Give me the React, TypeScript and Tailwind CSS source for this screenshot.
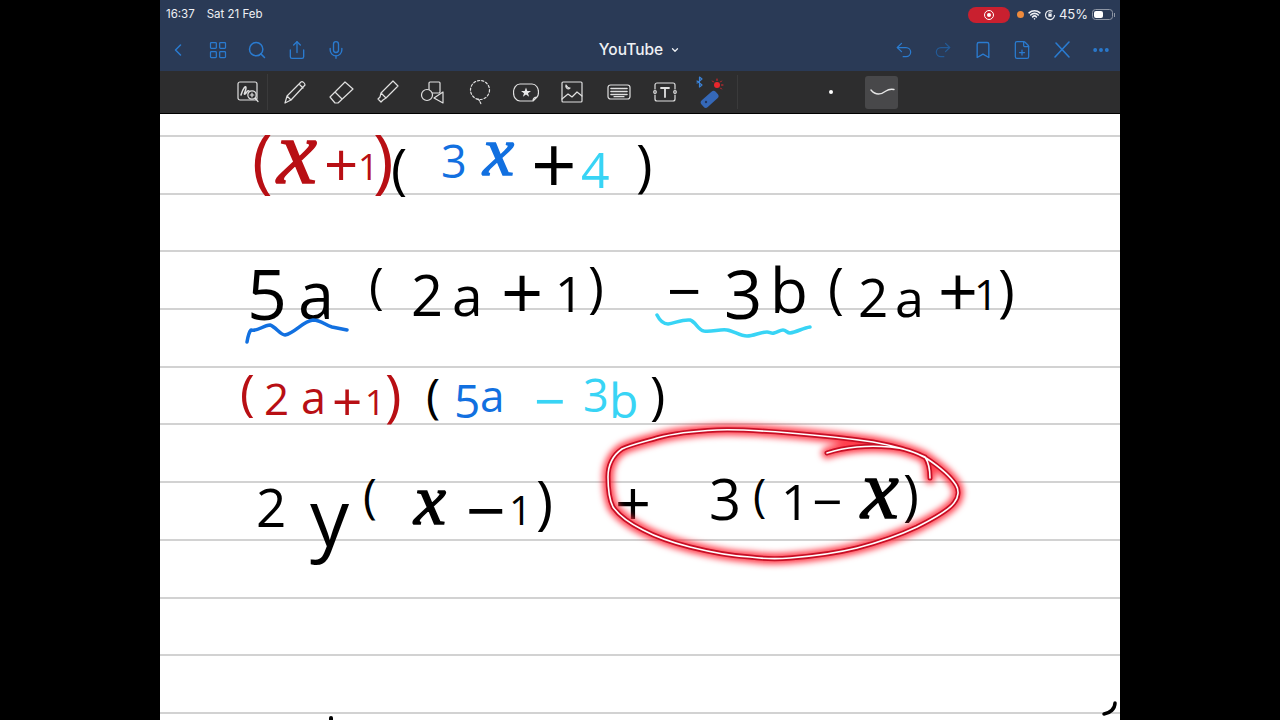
import { Bookmark, ChevronDown, ChevronLeft, Ellipsis, FilePlus, LayoutGrid, Mic, Redo2, Search, Share, Undo2, Wifi } from 'lucide-react'

const ruleRows = [0, 1, 2, 3, 4, 5, 6, 7, 8, 9]

// handwritten notes, placed on the page as on a free canvas. f marks the curly x
const notes = [
  { t: '(', c: 'left-[92px] top-[-5px] text-[70px] text-[#b80f14]' },
  { t: 'x', f: true, c: 'left-[117px] top-[-24px] text-[90px] text-[#b80f14]' },
  { t: '+', c: 'left-[164px] top-[8px] text-[60px] text-[#b80f14]' },
  { t: '1', c: 'left-[198px] top-[28px] text-[36px] font-medium text-[#b80f14]' },
  { t: ')', c: 'left-[213px] top-[-5px] text-[70px] text-[#b80f14]' },
  { t: '(', c: 'left-[231px] top-[14px] text-[55px] text-black' },
  { t: '3', c: 'left-[281px] top-[15px] text-[45px] font-medium text-[#1270e0]' },
  { t: 'x', f: true, c: 'left-[323px] top-[-11px] text-[70px] text-[#1270e0]' },
  { t: '+', c: 'left-[371px] top-[-7px] text-[80px] text-black' },
  { t: '4', c: 'left-[421px] top-[20px] text-[50px] font-medium text-[#38d4f5]' },
  { t: ')', c: 'left-[476px] top-[11px] text-[56px] text-black' },

  { t: '5', c: 'left-[87px] top-[130px] text-[70px] text-black' },
  { t: 'a', c: 'left-[138px] top-[135px] text-[65px] text-black' },
  { t: '(', c: 'left-[209px] top-[135px] text-[50px] text-black' },
  { t: '2', c: 'left-[251px] top-[141px] text-[56px] text-black' },
  { t: 'a', c: 'left-[292px] top-[142px] text-[55px] text-black' },
  { t: '+', c: 'left-[341px] top-[125px] text-[74px] text-black' },
  { t: '1', c: 'left-[395px] top-[144px] text-[50px] text-black' },
  { t: ')', c: 'left-[428px] top-[134px] text-[54px] text-black' },
  { t: '−', c: 'left-[507px] top-[134px] text-[60px] text-black' },
  { t: '3', c: 'left-[564px] top-[133px] text-[67px] text-black' },
  { t: 'b', c: 'left-[610px] top-[132px] text-[62px] text-black' },
  { t: '(', c: 'left-[668px] top-[135px] text-[54px] text-black' },
  { t: '2', c: 'left-[698px] top-[146px] text-[53px] text-black' },
  { t: 'a', c: 'left-[735px] top-[147px] text-[52px] text-black' },
  { t: '+', c: 'left-[778px] top-[127px] text-[70px] text-black' },
  { t: '1', c: 'left-[814px] top-[151px] text-[42px] font-medium text-black' },
  { t: ')', c: 'left-[838px] top-[136px] text-[57px] text-black' },

  { t: '(', c: 'left-[80px] top-[242px] text-[50px] font-medium text-[#b80f14]' },
  { t: '2', c: 'left-[104px] top-[254px] text-[44px] font-medium text-[#b80f14]' },
  { t: 'a', c: 'left-[141px] top-[251px] text-[45px] font-medium text-[#b80f14]' },
  { t: '+', c: 'left-[172px] top-[250px] text-[53px] font-medium text-[#b80f14]' },
  { t: '1', c: 'left-[205px] top-[263px] text-[35px] font-medium text-[#b80f14]' },
  { t: ')', c: 'left-[225px] top-[241px] text-[56px] text-[#b80f14]' },
  { t: '(', c: 'left-[266px] top-[247px] text-[48px] font-medium text-black' },
  { t: '5', c: 'left-[294px] top-[254px] text-[46px] font-medium text-[#1270e0]' },
  { t: 'a', c: 'left-[320px] top-[251px] text-[44px] font-medium text-[#1270e0]' },
  { t: '−', c: 'left-[374px] top-[247px] text-[55px] text-[#38d4f5]' },
  { t: '3', c: 'left-[423px] top-[249px] text-[45px] font-medium text-[#38d4f5]' },
  { t: 'b', c: 'left-[449px] top-[252px] text-[48px] font-medium text-[#38d4f5]' },
  { t: ')', c: 'left-[490px] top-[244px] text-[52px] text-black' },

  { t: '2', c: 'left-[96px] top-[356px] text-[53px] text-black' },
  { t: 'y', c: 'left-[150px] top-[348px] text-[78px] text-black' },
  { t: '(', c: 'left-[203px] top-[349px] text-[47px] font-medium text-black' },
  { t: 'x', f: true, c: 'left-[254px] top-[336px] text-[72px] text-black' },
  { t: '−', c: 'left-[306px] top-[346px] text-[70px] text-black' },
  { t: '1', c: 'left-[349px] top-[368px] text-[40px] font-medium text-black' },
  { t: ')', c: 'left-[376px] top-[346px] text-[58px] text-black' },
  { t: '+', c: 'left-[455px] top-[344px] text-[63px] text-black' },
  { t: '3', c: 'left-[549px] top-[345px] text-[56px] text-black' },
  { t: '(', c: 'left-[593px] top-[349px] text-[45px] font-medium text-black' },
  { t: '1', c: 'left-[621px] top-[352px] text-[50px] text-black' },
  { t: '−', c: 'left-[652px] top-[350px] text-[53px] text-black' },
  { t: 'x', f: true, c: 'left-[701px] top-[316px] text-[85px] text-black' },
  { t: ')', c: 'left-[743px] top-[342px] text-[54px] text-black' },
]

const lasso =
  'M930 478 C930 470 929 463 925 457 C908 449 890 445 873 442 C845 438 815 435 790 433 C765 431 740 429 717 430 C695 431 675 433 657 438 C643 442 630 445 622 449 C612 456 608 466 608 477 C608 490 609 499 613 507 C620 517 631 524 643 530 C658 538 674 543 690 547 C710 552 730 556 750 557 C765 559 778 559 790 558 C815 556 837 553 857 548 C880 542 900 535 917 527 C933 519 948 511 954 503 C959 497 959 490 956 485 C951 477 941 468 926 458 C914 451 902 448 890 447 C878 446 868 446 857 447 C846 448 836 450 827 453'

function Ink() {
  return (
    <svg className="absolute inset-0 h-full w-full" viewBox="160 114 960 606" fill="none" strokeLinecap="round" strokeLinejoin="round">
      <path d="M247 342 C248 336 249 332 251 330 C258 332 263 325 270 325 C276 327 280 335 285 335 C295 333 303 321 313 320 C321 320 325 325 332 327 L347 330" stroke="#1270e0" strokeWidth="3.5" />
      <path d="M657 315 C660 321 664 324 668 324 C675 323 683 319 690 320 C696 322 698 330 704 331 C712 332 720 329 727 330 C734 331 740 336 747 336 C754 336 760 332 767 332 C770 332 771 334 774 333 C778 332 780 330 783 330 C786 330 787 333 790 333 C797 332 803 328 810 327" stroke="#38d4f5" strokeWidth="3.5" />
      <path d="M331 718 L331 720" stroke="#000" strokeWidth="4" />
      <path d="M1115 703 C1115 709 1110 713 1104 714" stroke="#000" strokeWidth="3.5" />
      <path d={lasso} stroke="#ff2a3a" strokeOpacity="0.9" strokeWidth="11" className="blur-[3px]" />
      <path d={lasso} stroke="#c70f25" strokeWidth="5" />
      <path d={lasso} stroke="#ffffff" strokeWidth="1.6" />
    </svg>
  )
}

function ToolIcon({ children }: { children: React.ReactNode }) {
  return (
    <svg className="h-[26px] w-[26px] shrink-0" viewBox="0 0 26 26" fill="none" stroke="#e0e0e0" strokeWidth="1.2" strokeLinecap="round" strokeLinejoin="round">
      {children}
    </svg>
  )
}

function Toolbar() {
  return (
    <div className="flex h-[42px] items-center bg-[#2d2d2e] pl-[75px]">
      <ToolIcon>
        <rect x="3" y="3" width="19" height="18" rx="2" />
        <path d="M6 16 C8 9 11 6 11 9 C11 12 8 16 10 15 C12 13 13 11 14 12" strokeWidth="1.5" />
        <circle cx="17" cy="16" r="4.2" fill="#2d2d2e" />
        <path d="M17 14.2 V17.8 M15.2 16 H18.8 M20 19 L23 22.5" />
      </ToolIcon>
      <div className="ml-[6px] h-[36px] w-px bg-[#3a3a3b]" />
      <div className="ml-[13.5px] flex items-center gap-[20.3px]">
        <ToolIcon>
          <path d="M3 24 L5 17 L19 3 C20.5 2 23 4 23 6 L9 21 Z M5 17 L9 21 M17 5 L21 9" />
        </ToolIcon>
        <ToolIcon>
          <path d="M2 18 L17 3 L25 10 L10 24 H7 Z M7 13 L14 20" />
        </ToolIcon>
        <ToolIcon>
          <path d="M7 14 L19 2 L24 7 L12 19 Z M7 14 L6 18 L4 20 L7 23 L9 21 L12 19" />
        </ToolIcon>
        <ToolIcon>
          <rect x="9" y="3" width="11" height="11" rx="1" />
          <circle cx="7" cy="16" r="5.5" fill="#2d2d2e" />
          <path d="M23 13 V24 L14 19 Z" fill="#2d2d2e" />
        </ToolIcon>
        <ToolIcon>
          <circle cx="13" cy="11" r="9.5" strokeDasharray="2.2 2" />
          <path d="M11 20 C13 22 13 23 14 25" strokeDasharray="2 1.5" />
        </ToolIcon>
        <ToolIcon>
          <path d="M7 5 H19 C23 5 25.5 9 25.5 13 C25.5 15 25 17 24 18 L20 22 H7 C3 22 .5 18 .5 13.5 C.5 9 3 5 7 5 Z M20 22 C20 19 21 18 24 18" />
          <path d="M13 8.5 L14.3 12 H18 L15 14.2 L16.1 17.8 L13 15.6 L9.9 17.8 L11 14.2 L8 12 H11.7 Z" fill="#e8e8e8" stroke="none" />
        </ToolIcon>
        <ToolIcon>
          <rect x="3" y="3" width="20" height="20" rx="1" />
          <path d="M3 20 L9 15 L13 18 L18 13 L23 17 M7 6 C6 9 9 11 11 9 C9 9 8 8 7 6" />
        </ToolIcon>
        <ToolIcon>
          <rect x="2" y="6" width="22" height="14" rx="2.5" />
          <path d="M5 9.5 H21 M5 12.5 H21 M5 15.5 H21" strokeWidth="1.6" strokeDasharray="1.4 .7" />
          <path d="M8 17.7 H18" />
        </ToolIcon>
        <ToolIcon>
          <path d="M3 10 V6 C3 5 4 4 5 4 H21 C22 4 23 5 23 6 V10 M3 16 V20 C3 21 4 22 5 22 H21 C22 22 23 21 23 20 V16" />
          <circle cx="3" cy="13" r="1.3" />
          <circle cx="23" cy="13" r="1.3" />
          <path d="M9 9 H17 M13 9 V18" strokeWidth="1.8" />
        </ToolIcon>
        <svg className="-ml-[4px] h-[32px] w-[30px] shrink-0" viewBox="0 0 30 32" fill="none" strokeLinecap="round" strokeLinejoin="round">
          <path d="M3 5 L8 9 L5.5 11 V1 L8 3 L3 7" stroke="#3b82d6" strokeWidth="1.2" />
          <rect x="6" y="18.5" width="19" height="9" rx="3" fill="#3568b8" transform="rotate(-42 16 23)" />
          <circle cx="12" cy="26" r="1.2" fill="#20365f" />
          <circle cx="23" cy="9" r="3" fill="#e8262c" />
          <path d="M23 3 V4.5 M27.5 5 L26.5 6 M29 9 H27.5 M18.5 5 L19.5 6 M27.5 13 L26.5 12" stroke="#e8262c" strokeWidth="1" />
        </svg>
      </div>
      <div className="ml-[13px] h-[34px] w-px bg-[#3a3a3b]" />
      <div className="ml-[91px] h-1 w-1 rounded-full bg-white" />
      <div className="ml-[32px] flex h-[33px] w-[33px] items-center justify-center rounded-[3px] bg-[#48484a]">
        <svg className="h-[12px] w-[26px]" viewBox="0 0 26 12" fill="none" strokeLinecap="round">
          <path d="M2 4 C7 10 13 8 17 5 C19 3.5 22 3 25 3.5" stroke="#e6e6e6" strokeWidth="1.4" />
        </svg>
      </div>
    </div>
  )
}

function Header() {
  return (
    <div className="bg-[#2a3a56]">
      <div className="flex h-[28px] items-center justify-between pl-[6px] pr-[5px] pt-[1px] text-[11.5px] text-[#eef0f4]">
        <div className="flex gap-[12px]">
          <span>16:37</span>
          <span>Sat 21 Feb</span>
        </div>
        <div className="flex items-center">
          <div className="flex h-4 w-[42px] items-center justify-center rounded-full bg-[#c9202f]">
            <div className="flex h-[10px] w-[10px] items-center justify-center rounded-full border border-white">
              <div className="h-1 w-1 rounded-full bg-white" />
            </div>
          </div>
          <div className="ml-[7px] h-[7px] w-[7px] rounded-full bg-[#ee8a3c]" />
          <Wifi className="ml-[4px] h-[13px] w-[13px]" strokeWidth={3} />
          <svg className="ml-[3px] h-[12px] w-[12px]" viewBox="0 0 12 12" fill="none" stroke="#eef0f4" strokeWidth="1.2">
            <path d="M10.5 6 A4.5 4.5 0 1 1 8.5 2.3" />
            <rect x="4.3" y="5" width="3.4" height="2.8" fill="#eef0f4" stroke="none" />
            <path d="M5 5 V4 A1 1 0 0 1 7 4 V5" strokeWidth=".8" />
          </svg>
          <span className="ml-[3px] text-[13px]">45%</span>
          <div className="ml-[4px] flex h-[11px] w-[21px] items-center rounded-[3.5px] border border-[#8e96a5] p-px">
            <div className="h-full w-[9px] rounded-[2px] bg-white" />
          </div>
          <div className="ml-px h-[4px] w-px bg-[#8e96a5]" />
        </div>
      </div>
      <div className="grid h-[43px] grid-cols-[1fr_auto_1fr] items-center pl-[8px] pr-[9px] text-[#2a7bd0]">
        <div className="flex items-center gap-[19.5px]">
          <ChevronLeft className="h-5 w-5" strokeWidth={1.8} />
          <LayoutGrid className="h-5 w-5" strokeWidth={1.5} />
          <Search className="h-5 w-5" strokeWidth={1.8} />
          <Share className="h-5 w-5" strokeWidth={1.6} />
          <Mic className="h-5 w-5" strokeWidth={1.6} />
        </div>
        <div className="flex items-center gap-[7px] pt-[1px] text-[15.5px] font-medium text-[#eef0f4]">
          <span>YouTube</span>
          <ChevronDown className="h-[10px] w-[10px]" strokeWidth={3} />
        </div>
        <div className="flex items-center justify-end gap-[19.5px]">
          <Undo2 className="h-5 w-5" strokeWidth={1.5} />
          <Redo2 className="h-5 w-5 text-[#235a96]" strokeWidth={1.5} />
          <Bookmark className="h-5 w-5" strokeWidth={1.6} />
          <FilePlus className="h-5 w-5" strokeWidth={1.5} />
          <svg className="h-5 w-5" viewBox="0 0 20 20" fill="none" stroke="currentColor" strokeWidth="1.6" strokeLinecap="round">
            <path d="M4 3 L17 17 M17 2 L3 17" />
          </svg>
          <Ellipsis className="h-5 w-5" strokeWidth={2.6} />
        </div>
      </div>
    </div>
  )
}

export default function App() {
  return (
    <div className="flex h-[720px] w-[1280px] justify-center overflow-hidden bg-black font-['Inter',sans-serif]">
      <div className="flex w-[960px] flex-col">
        <Header />
        <Toolbar />
        <div className="h-px bg-black" />
        <div className="relative flex-1 bg-white">
          <div className="h-[23px] border-b-2 border-[#d2d2d2]" />
          {ruleRows.map((r) => (
            <div key={r} className="h-[57.7px] border-b-2 border-[#d2d2d2]" />
          ))}
          <div aria-label="handwritten notes">
            {notes.map((n, i) => (
              <span
                key={i}
                className={`absolute leading-[1.4] ${n.f ? "font-['Liberation_Serif'] italic [-webkit-text-stroke:1.5px_currentColor]" : "font-['Open_Sans']"} ${n.c}`}
              >
                {n.t}
              </span>
            ))}
          </div>
          <Ink />
        </div>
      </div>
    </div>
  )
}
